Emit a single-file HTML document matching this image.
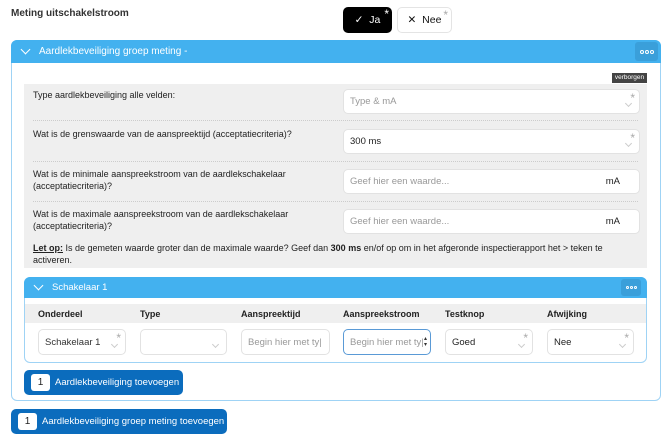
<!DOCTYPE html>
<html><head><meta charset="utf-8"><style>
*{box-sizing:border-box;margin:0;padding:0}
body{width:670px;height:437px;background:#fff;font-family:"Liberation Sans",sans-serif;color:#222;position:relative;overflow:hidden;font-size:9px}
.a{position:absolute}
.inp{position:absolute;background:#fff;border:1px solid #e2e2e2;border-radius:5px;font-size:9.5px;color:#999;padding-left:6px;display:flex;align-items:center}
.star{position:absolute;right:4px;top:1px;color:#aaa;font-size:12px}
.chev{position:absolute;right:8px;bottom:7px;width:5px;height:5px;border-right:1px solid #ccc;border-bottom:1px solid #ccc;transform:rotate(45deg)}
.sep{position:absolute;left:33px;width:605px;border-top:1px dotted #ccc}
.lbl{position:absolute;left:33px;font-size:9px;line-height:12px;color:#222}
.th{position:absolute;top:309px;font-size:9px;font-weight:bold;color:#222}
.btn{position:absolute;background:#0b6cbd;border-radius:5px;color:#fff;font-size:9.5px;display:flex;align-items:center}
.btn b{background:#fff;color:#222;font-weight:normal;width:19px;height:17px;border-radius:3px;display:flex;align-items:center;justify-content:center;margin:0 5px 0 7px;font-size:10px}
.dots{position:absolute;display:flex;gap:1px;align-items:center;justify-content:center;border-radius:3px}
.dots i{width:4px;height:4px;border:1px solid #fff;border-radius:50%}
</style></head><body>
<div class="a" style="left:11px;top:8px;font-size:10px;font-weight:bold;color:#333">Meting uitschakelstroom</div>
<div class="a" style="left:343px;top:7px;width:49px;height:26px;background:#000;border-radius:5px;color:#fff;font-size:10.5px;display:flex;align-items:center;justify-content:center">✓&nbsp; Ja<span style="position:absolute;right:3px;top:0;font-size:12px">*</span></div>
<div class="a" style="left:397px;top:7px;width:55px;height:26px;background:#fff;border:1px solid #e4e4e4;border-radius:5px;color:#111;font-size:10.5px;display:flex;align-items:center;justify-content:center">✕&nbsp; Nee<span style="position:absolute;right:3px;top:0;font-size:12px;color:#aaa">*</span></div>

<div class="a" style="left:11px;top:40px;width:650px;height:361px;border:1px solid #9fd3f5;border-radius:6px"></div>
<div class="a" style="left:11px;top:40px;width:650px;height:23px;background:#43b1ef;border-radius:6px 6px 0 0;color:#fff;font-size:10px;display:flex;align-items:center;padding-left:9px"><span style="display:inline-block;width:7px;height:7px;border-right:1px solid #fff;border-bottom:1px solid #fff;transform:rotate(45deg);margin:-4px 10px 0 2px"></span>Aardlekbeveiliging groep meting -</div>
<div class="dots" style="left:635px;top:42px;width:23px;height:19px;background:#3a9fda"><i></i><i></i><i></i></div>
<div class="a" style="left:612px;top:73px;width:35px;height:10px;background:#444;color:#fff;font-size:6.5px;text-align:center;line-height:10px">verborgen</div>

<div class="a" style="left:24px;top:84px;width:623px;height:184px;background:#efefef"></div>
<div class="lbl" style="top:89px">Type aardlekbeveiliging alle velden:</div>
<div class="inp" style="left:343px;top:89px;width:297px;height:25px">Type &amp; mA<span class="star">*</span><span class="chev"></span></div>
<div class="sep" style="top:120px"></div>
<div class="lbl" style="top:128px">Wat is de grenswaarde van de aanspreektijd (acceptatiecriteria)?</div>
<div class="inp" style="left:343px;top:129px;width:297px;height:25px;color:#222">300 ms<span class="star">*</span><span class="chev"></span></div>
<div class="sep" style="top:161px"></div>
<div class="lbl" style="top:168px">Wat is de minimale aanspreekstroom van de aardlekschakelaar<br>(acceptatiecriteria)?</div>
<div class="inp" style="left:343px;top:169px;width:297px;height:25px">Geef hier een waarde...<span style="position:absolute;right:19px;color:#222">mA</span></div>
<div class="sep" style="top:201px"></div>
<div class="lbl" style="top:208px">Wat is de maximale aanspreekstroom van de aardlekschakelaar<br>(acceptatiecriteria)?</div>
<div class="inp" style="left:343px;top:209px;width:297px;height:25px">Geef hier een waarde...<span style="position:absolute;right:19px;color:#222">mA</span></div>
<div class="lbl" style="top:242px"><b><u>Let op:</u></b> Is de gemeten waarde groter dan de maximale waarde? Geef dan <b>300 ms</b> en/of op om in het afgeronde inspectierapport het &gt; teken te<br>activeren.</div>

<div class="a" style="left:24px;top:277px;width:623px;height:86px;border:1px solid #9fd3f5;border-radius:6px"></div>
<div class="a" style="left:24px;top:277px;width:623px;height:21px;background:#43b1ef;border-radius:6px 6px 0 0;color:#fff;font-size:9.5px;display:flex;align-items:center;padding-left:9px"><span style="display:inline-block;width:7px;height:7px;border-right:1px solid #fff;border-bottom:1px solid #fff;transform:rotate(45deg);margin:-4px 10px 0 2px"></span>Schakelaar 1</div>
<div class="dots" style="left:621px;top:279px;width:20px;height:17px;background:#3a9fda"><i style="width:3px;height:3px"></i><i style="width:3px;height:3px"></i><i style="width:3px;height:3px"></i></div>
<div class="a" style="left:25px;top:304px;width:621px;height:19px;background:#efefef"></div>
<div class="th" style="left:38px">Onderdeel</div>
<div class="th" style="left:140px">Type</div>
<div class="th" style="left:241px">Aanspreektijd</div>
<div class="th" style="left:343px">Aanspreekstroom</div>
<div class="th" style="left:445px">Testknop</div>
<div class="th" style="left:547px">Afwijking</div>
<div class="inp" style="left:38px;top:329px;width:88px;height:26px;color:#333">Schakelaar 1<span class="star">*</span><span class="chev"></span></div>
<div class="inp" style="left:140px;top:329px;width:87px;height:26px"><span class="chev"></span></div>
<div class="inp" style="left:241px;top:329px;width:89px;height:26px">Begin hier met ty|</div>
<div class="inp" style="left:343px;top:329px;width:88px;height:26px;border-color:#5a9ad6">Begin hier met ty|<span style="position:absolute;right:3px;font-size:6px;color:#333;line-height:6px">▴<br>▾</span></div>
<div class="inp" style="left:445px;top:329px;width:88px;height:26px;color:#222">Goed<span class="star">*</span><span class="chev"></span></div>
<div class="inp" style="left:547px;top:329px;width:87px;height:26px;color:#222">Nee<span class="star">*</span><span class="chev"></span></div>

<div class="btn" style="left:24px;top:370px;width:159px;height:25px"><b>1</b>Aardlekbeveiliging toevoegen</div>
<div class="btn" style="left:11px;top:409px;width:216px;height:25px"><b>1</b>Aardlekbeveiliging groep meting toevoegen</div>
</body></html>
